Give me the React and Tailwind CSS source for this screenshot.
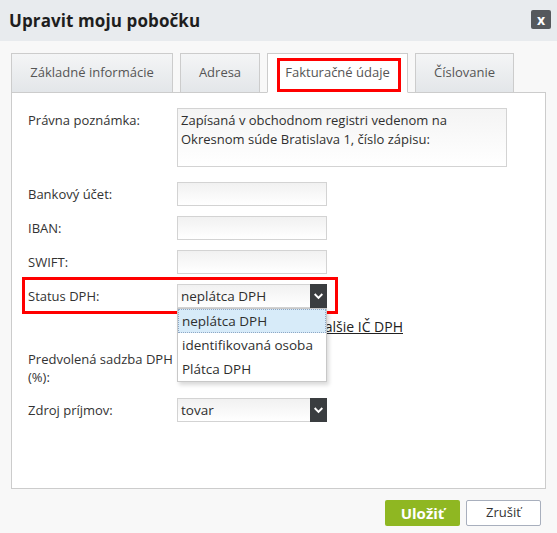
import { useState } from "react";

function Chevron() {
  return (
    <svg viewBox="0 0 10 10" className="w-[9px] h-[9px]" fill="none">
      <polyline
        points="1.5,3 5,6.5 8.5,3"
        stroke="white"
        strokeWidth="2.2"
        strokeLinecap="square"
      />
    </svg>
  );
}

function Select({ value }) {
  return (
    <div className="flex h-[24px] w-[150px] border border-[#d3d3d3] bg-gradient-to-b from-[#f1f1f1] to-white">
      <div className="flex-1 px-[3px] leading-[22px] text-[13.5px] text-[#2f2f2f]">
        {value}
      </div>
      <div className="w-[17px] -my-px -mr-px bg-[#3a3d40] flex items-center justify-center">
        <Chevron />
      </div>
    </div>
  );
}

function Input() {
  return (
    <div className="h-[24px] w-[150px] border border-[#d3d3d3] bg-gradient-to-b from-[#f1f1f1] to-white" />
  );
}

function Row({ label, children, className = "" }) {
  return (
    <div className={`flex items-center ${className}`}>
      <div className="w-[149px] leading-[19px]">{label}</div>
      {children}
    </div>
  );
}

const tabs = [
  { name: "Základné informácie", w: "w-[162px]" },
  { name: "Adresa", w: "w-[80px]" },
  { name: "Fakturačné údaje", w: "w-[141px]", active: true },
  { name: "Číslovanie", w: "w-[99px]" },
];

export default function App() {
  const [status] = useState("neplátca DPH");
  const options = ["neplátca DPH", "identifikovaná osoba", "Plátca DPH"];

  return (
    <div className="w-[557px] h-[533px] bg-[#f8f8f8] font-['Open_Sans',sans-serif] text-[13px] text-[#333] overflow-hidden">
      {/* HEADER */}
      <div className="h-[41px] bg-[#e8ebee] flex items-center justify-between pl-[9px] pr-[6px]">
        <h1 className="text-[17px] font-bold text-[#1e1e1e] tracking-[0.1px]">
          Upravit moju pobočku
        </h1>
        <button className="w-[20px] h-[19px] -mt-[3px] bg-[#55595d] rounded-[2px] text-white font-bold text-[14px] leading-[17px] flex items-center justify-center">
          x
        </button>
      </div>

      {/* TABS */}
      <div className="flex gap-[7px] pl-[11px] mt-[12px] relative z-10">
        {tabs.map((t) => (
          <div
            key={t.name}
            className={`${t.w} h-[40px] border border-[#cccccc] flex items-center justify-center text-[#555] text-[13px] relative ${
              t.active
                ? "bg-white border-b-white"
                : "bg-gradient-to-b from-[#f4f5f6] to-[#e3e6e9]"
            }`}
          >
            {t.name}
            {t.active && (
              <div className="absolute left-[9px] top-[4px] w-[124px] h-[34px] border-[3px] border-[#ff0000]" />
            )}
          </div>
        ))}
      </div>

      {/* PANEL */}
      <div className="mx-[11px] -mt-px h-[397px] bg-white border border-[#cccccc] pt-[15px] pl-[16px]">
        <div className="flex items-start">
          <div className="w-[149px] leading-[19px] pt-[3px]">Právna poznámka:</div>
          <div className="w-[330px] h-[59px] border border-[#d3d3d3] bg-gradient-to-b from-[#f4f4f4] to-white px-[3px] pt-[2px] leading-[19px] text-[#2f2f2f]">
            Zapísaná v obchodnom registri vedenom na Okresnom súde Bratislava
            1, číslo zápisu:
          </div>
        </div>

        <Row label="Bankový účet:" className="mt-[15px]">
          <Input />
        </Row>
        <Row label="IBAN:" className="mt-[10px]">
          <Input />
        </Row>
        <Row label="SWIFT:" className="mt-[10px]">
          <Input />
        </Row>

        <div className="relative mt-[10px] z-20">
          <Row label="Status DPH:">
            <div className="relative">
              <Select value={status} />
              {/* open dropdown */}
              <div className="absolute left-0 top-[24px] w-[150px] bg-white border border-[#c8c8c8] shadow-[2px_3px_4px_rgba(0,0,0,0.15)] z-30">
                {options.map((o, i) => (
                  <div
                    key={o}
                    className={`h-[24px] px-[3px] leading-[22px] text-[13.5px] text-[#2f2f2f] ${
                      i === 0
                        ? "bg-[#d7ebf9] border border-dotted border-[#8fa7c4]"
                        : "border border-transparent"
                    }`}
                  >
                    {o}
                  </div>
                ))}
              </div>
            </div>
          </Row>
          <div className="absolute left-[-6px] top-[-7px] w-[316px] h-[37px] border-[3px] border-[#ff0000] pointer-events-none" />
        </div>

        <div className="mt-[9px] pl-[149px] leading-[19px]">
          <div className="w-[226px] text-right">
            <a href="#" className="underline text-[#222] text-[14px]">
              Pridať ďalšie IČ DPH
            </a>
          </div>
        </div>

        <div className="flex items-start mt-[13px]">
          <div className="w-[149px] leading-[18px] pr-[2px]">
            Predvolená sadzba DPH (%):
          </div>
          <Input />
        </div>

        <Row label="Zdroj príjmov:" className="mt-[12px]">
          <Select value="tovar" />
        </Row>
      </div>

      {/* FOOTER BUTTONS */}
      <div className="flex justify-end gap-[6px] mt-[11px] pr-[16px]">
        <button className="w-[75px] h-[26px] bg-[#8fb722] rounded-[2px] text-white font-bold text-[15px]">
          Uložiť
        </button>
        <button className="w-[75px] h-[26px] bg-white border border-[#a8afbd] rounded-[2px] text-[#333] text-[13px]">
          Zrušiť
        </button>
      </div>
    </div>
  );
}
